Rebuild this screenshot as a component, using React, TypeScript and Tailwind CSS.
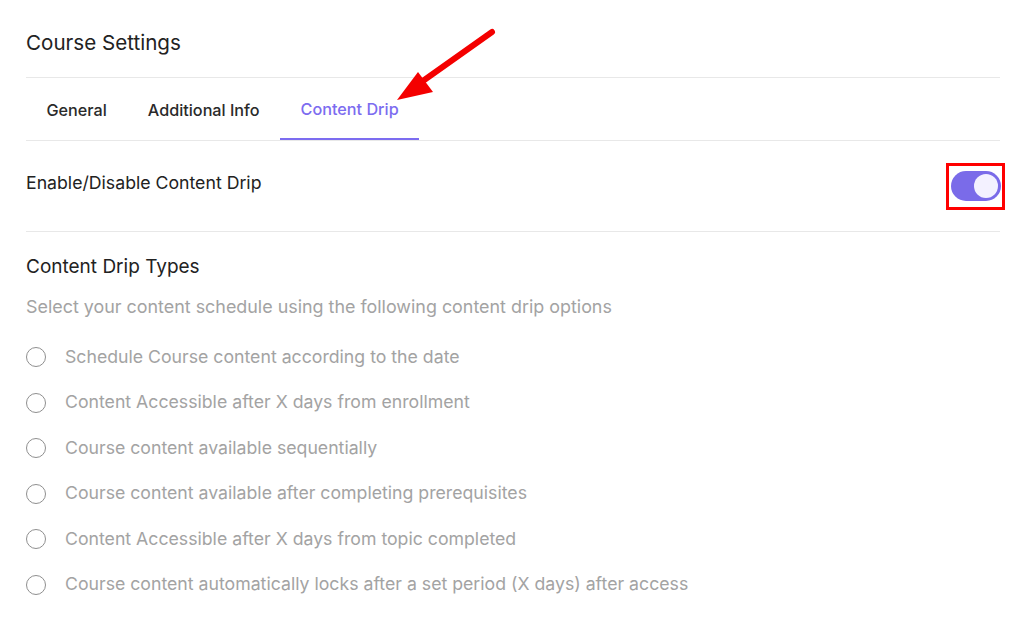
const options = [
  'Schedule Course content according to the date',
  'Content Accessible after X days from enrollment',
  'Course content available sequentially',
  'Course content available after completing prerequisites',
  'Content Accessible after X days from topic completed',
  'Course content automatically locks after a set period (X days) after access',
]

const tabs = ['General', 'Additional Info', 'Content Drip']

const App = () => {
  return (
    <div className="relative h-[630px] w-[1024px] overflow-hidden bg-white font-['Inter',sans-serif]">
      <div className="ml-[26px] w-[974px]">
        {/* Header */}
        <div className="flex h-[78px] items-center border-b border-[#e8e8e8] pt-[9px]">
          <h1 className="text-[20.6px] font-normal text-[#222]">Course Settings</h1>
        </div>

        {/* Tabs */}
        <div className="flex h-[63px] border-b border-[#e8e8e8]">
          {tabs.map((t) => (
            <div
              key={t}
              className={
                t === 'Content Drip'
                  ? 'flex items-center border-b-2 border-[#7c6cf0] px-[20.5px] pt-[3px] text-[16.2px] font-medium text-[#7c6cf0]'
                  : 'flex items-center px-[20.5px] pt-[3px] text-[16.2px] font-medium text-[#2a2a2a]'
              }
            >
              {t}
            </div>
          ))}
        </div>

        {/* Toggle row */}
        <div className="flex h-[91px] items-center justify-between border-b border-[#e8e8e8]">
          <span className="mb-[5px] text-[17.7px] text-[#222]">Enable/Disable Content Drip</span>
          <div className="mr-[-5px] flex h-[47px] w-[59px] items-center justify-center border-[3px] border-[#ff0000]">
            <div className="flex h-[30px] w-[50px] items-center justify-end rounded-full bg-[#7a6be9] pr-[3px]">
              <div className="h-[24px] w-[24px] rounded-full bg-[#f3f1ff]" />
            </div>
          </div>
        </div>

        {/* Drip types */}
        <div className="pt-[23px]">
          <h2 className="text-[19px] font-normal leading-[24px] text-[#222]">Content Drip Types</h2>
          <p className="mt-[16px] text-[17.9px] leading-[24px] text-[#a3a3a3]">
            Select your content schedule using the following content drip options
          </p>
          <div className="mt-[26px] flex flex-col gap-[21.5px]">
            {options.map((o) => (
              <label key={o} className="flex h-[24px] items-center gap-[19px]">
                <span className="h-[20px] w-[20px] shrink-0 rounded-full border-[1.5px] border-[#8f8f8f]" />
                <span className="text-[17.7px] text-[#a3a3a3]">{o}</span>
              </label>
            ))}
          </div>
        </div>
      </div>

      {/* Annotation arrow */}
      <svg className="absolute left-0 top-0" width="1024" height="630">
        <line x1="492" y1="32" x2="420" y2="83" stroke="#f40000" strokeWidth="6" strokeLinecap="round" />
        <polygon points="397,100 418,72 433,92" fill="#f40000" />
      </svg>
    </div>
  )
}

export default App
